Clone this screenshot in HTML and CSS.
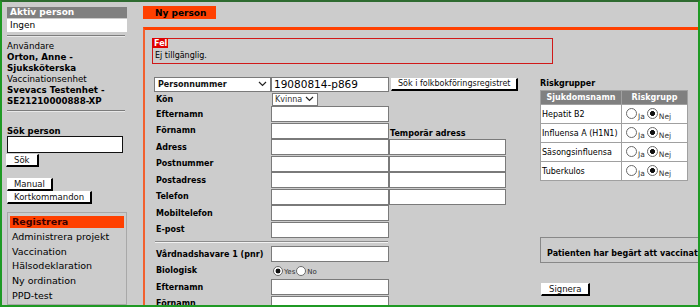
FILE: index.html
```html
<!DOCTYPE html>
<html>
    <head>
        <meta charset="UTF-8">
        <title>Ny person</title>
        <link rel="stylesheet" href="styles.css">
    </head>
    <body>
        <div class="frame">
            <div class="sidebar">
                <div class="box-title">Aktiv person</div>
                <div class="active-name">Ingen</div>
                <hr class="side-rule">
                <div class="user">
                    Användare<br>
                    <b>Orton, Anne -</b><br>
                    <b>Sjuksköterska</b><br>
                    Vaccinationsenhet<br>
                    <b>Svevacs Testenhet -</b><br>
                    <b>SE21210000888-XP</b>
                </div>
                <hr class="side-rule">
                <div class="search">
                    <div class="search-label">Sök person</div>
                    <input class="search-input" type="text">
                    <button class="btn">Sök</button>
                </div>
                <div class="tools">
                    <button class="btn">Manual</button>
                    <button class="btn">Kortkommandon</button>
                </div>
                <ul class="nav">
                    <li class="selected">Registrera</li>
                    <li>Administrera projekt</li>
                    <li>Vaccination</li>
                    <li>Hälsodeklaration</li>
                    <li>Ny ordination</li>
                    <li>PPD-test</li>
                </ul>
            </div>

            <div class="main">
                <div class="tab">Ny person</div>
                <div class="panel">
                    <div class="error">
                        <div class="error-tag">Fel</div>
                        <div class="error-text">Ej tillgänglig.</div>
                    </div>

                    <div class="columns">
                        <div class="person-form">
                            <div class="row row-first">
                                <div class="select wide">
                                    <select><option>Personnummer</option></select>
                                    <svg width="9" height="6" viewBox="0 0 9 6"><path d="M1 1 L4.5 4.5 L8 1" fill="none" stroke="#222" stroke-width="1.2"/></svg>
                                </div>
                                <input class="field pnr" type="text" value="19080814-p869">
                                <button class="btn lookup">Sök i folkbokföringsregistret</button>
                            </div>
                            <div class="row row-small">
                                <label>Kön</label>
                                <div class="select small">
                                    <select><option>Kvinna</option></select>
                                    <svg width="9" height="6" viewBox="0 0 9 6"><path d="M1 1 L4.5 4.5 L8 1" fill="none" stroke="#222" stroke-width="1.2"/></svg>
                                </div>
                            </div>
                            <div class="row">
                                <label>Efternamn</label>
                                <input class="field" type="text">
                            </div>
                            <div class="row">
                                <label>Förnamn</label>
                                <input class="field" type="text">
                                <span class="temp-title">Temporär adress</span>
                            </div>
                            <div class="row">
                                <label>Adress</label>
                                <input class="field" type="text">
                                <input class="field temp" type="text">
                            </div>
                            <div class="row">
                                <label>Postnummer</label>
                                <input class="field" type="text">
                                <input class="field temp" type="text">
                            </div>
                            <div class="row">
                                <label>Postadress</label>
                                <input class="field" type="text">
                                <input class="field temp" type="text">
                            </div>
                            <div class="row">
                                <label>Telefon</label>
                                <input class="field" type="text">
                                <input class="field temp" type="text">
                            </div>
                            <div class="row">
                                <label>Mobiltelefon</label>
                                <input class="field" type="text">
                            </div>
                            <div class="row">
                                <label>E-post</label>
                                <input class="field" type="text">
                            </div>

                            <hr class="form-rule">

                            <div class="row">
                                <label>Vårdnadshavare 1 (pnr)</label>
                                <input class="field" type="text">
                            </div>
                            <div class="row">
                                <label>Biologisk</label>
                                <div class="choices">
                                    <input type="radio" name="bio" checked><span>Yes</span>
                                    <input type="radio" name="bio"><span>No</span>
                                </div>
                            </div>
                            <div class="row">
                                <label>Efternamn</label>
                                <input class="field" type="text">
                            </div>
                            <div class="row">
                                <label>Förnamn</label>
                                <input class="field" type="text">
                            </div>
                        </div>

                        <div class="side-col">
                            <div class="risk-title">Riskgrupper</div>
                            <table class="risk">
                                <tr>
                                    <th class="name-col">Sjukdomsnamn</th>
                                    <th>Riskgrupp</th>
                                </tr>
                                <tr>
                                    <td>Hepatit B2</td>
                                    <td class="opts"><input type="radio" name="r1"><span>Ja</span><input type="radio" name="r1" checked><span>Nej</span></td>
                                </tr>
                                <tr>
                                    <td>Influensa A (H1N1)</td>
                                    <td class="opts"><input type="radio" name="r2"><span>Ja</span><input type="radio" name="r2" checked><span>Nej</span></td>
                                </tr>
                                <tr>
                                    <td>Säsongsinfluensa</td>
                                    <td class="opts"><input type="radio" name="r3"><span>Ja</span><input type="radio" name="r3" checked><span>Nej</span></td>
                                </tr>
                                <tr>
                                    <td>Tuberkulos</td>
                                    <td class="opts"><input type="radio" name="r4"><span>Ja</span><input type="radio" name="r4" checked><span>Nej</span></td>
                                </tr>
                            </table>

                            <div class="consent">Patienten har begärt att vaccinationen inte registreras</div>
                            <button class="btn sign">Signera</button>
                        </div>
                    </div>
                </div>
            </div>
        </div>
    </body>
</html>
```

FILE: styles.css
```css
body {
    margin: 0;
    background: #cccccc;
    font-family: "DejaVu Sans", Verdana, sans-serif;
}

.frame {
    width: 700px;
    height: 307px;
    box-sizing: border-box;
    border: 2px solid #1f9a24;
    border-top-color: #2e6b30;
    background: #cccccc;
    display: flex;
    overflow: hidden;
}

/* sidebar */

.sidebar {
    width: 120px;
    flex: none;
    padding: 5px 0 0 5px;
}

.box-title {
    background: #808080;
    color: white;
    font-weight: bold;
    font-size: 9px;
    line-height: 11px;
    padding-left: 3px;
}

.active-name {
    background: white;
    margin-top: 1px;
    font-size: 9px;
    line-height: 13px;
    padding-left: 3px;
}

.side-rule {
    margin: 3px 2px 0 0;
    border: none;
    border-top: 1px solid #7c7c7c;
    border-bottom: 1px solid #e8e8e8;
}

.user {
    margin-top: 4px;
    font-size: 8.7px;
    line-height: 11px;
}

.search {
    margin-top: 14px;
}

.search-label {
    font-weight: bold;
    font-size: 8.5px;
    line-height: 10px;
}

.search-input {
    display: block;
    box-sizing: border-box;
    width: 116px;
    height: 17px;
    margin: 0;
    border: 1px solid #111;
    background: white;
}

.btn {
    display: block;
    background: white;
    border: 1px solid white;
    border-right: 2px solid black;
    border-bottom: 2px solid black;
    font-family: "DejaVu Sans", Verdana, sans-serif;
    font-size: 8.5px;
    line-height: 9px;
    height: 13px;
    padding: 0 6px;
    margin: 1px 0 0;
    color: #111;
}

.search .btn {
    margin-left: -1px;
    padding: 0 7px;
}

.tools {
    margin-top: 11px;
}

.tools .btn {
    margin-top: 0;
}

.nav {
    list-style: none;
    margin: 8px 0 0;
    padding: 3px 2px 0 2px;
    border: 1px solid #a8a8a8;
    font-size: 9.5px;
}

.nav li {
    line-height: 14.7px;
    padding-left: 2px;
}

.nav .selected {
    background: #ff4000;
    color: #3a0000;
    font-weight: bold;
    line-height: 12px;
    margin-bottom: 2px;
}

/* main */

.main {
    flex: 1;
    margin-left: 16px;
}

.tab {
    width: 61px;
    height: 13px;
    margin-top: 4px;
    padding-left: 12px;
    background: #ff4000;
    font-weight: bold;
    font-size: 9px;
    line-height: 14px;
}

.panel {
    margin-top: 8px;
    border-top: 3px solid #ff4000;
    border-left: 2px solid #f2602e;
    padding: 8px 0 0 7px;
    height: 300px;
}

.error {
    width: 399px;
    height: 24px;
    border: 1px solid #d01818;
}

.error-tag {
    width: 14px;
    height: 10px;
    margin: -1px 0 0 -1px;
    padding-left: 2px;
    overflow: hidden;
    background: #e00000;
    color: white;
    font-weight: bold;
    font-size: 8px;
    line-height: 11px;
}

.error-text {
    font-size: 8px;
    line-height: 11px;
    padding-left: 2px;
    margin-top: 2px;
}

.columns {
    display: flex;
    margin-top: 12px;
}

.person-form {
    width: 384px;
    margin-left: 2px;
    flex: none;
}

.row {
    display: flex;
    align-items: center;
    height: 16.5px;
}

.row-first {
    height: 16px;
}

.row-small {
    height: 14px;
}

.row label {
    width: 115px;
    padding-left: 2px;
    flex: none;
    font-size: 8px;
    font-weight: bold;
}

.field {
    box-sizing: border-box;
    width: 118px;
    height: 16px;
    margin: 0;
    border: 1px solid #7a7a7a;
    background: white;
    font-family: "DejaVu Sans", Verdana, sans-serif;
    padding: 0 2px;
}

.field.temp {
    width: 117px;
    margin-left: 0;
}

.pnr {
    font-size: 10.5px;
    height: 15px;
}

.select {
    display: flex;
    align-items: center;
    box-sizing: border-box;
    background: white;
    border: 1px solid #7a7a7a;
}

.select select {
    appearance: none;
    -webkit-appearance: none;
    border: none;
    background: transparent;
    flex: 1;
    padding: 0 0 0 3px;
    margin: 0;
    font-family: "DejaVu Sans", Verdana, sans-serif;
    font-size: 8px;
    font-weight: bold;
    color: #111;
}

.select svg {
    margin-right: 3px;
    flex: none;
}

.select.wide {
    width: 117px;
    height: 15px;
}

.select.small {
    width: 46px;
    height: 13px;
    margin-left: 1px;
}

.select.small select {
    font-weight: normal;
    color: #333;
    padding-left: 2px;
}

.lookup {
    margin: 0 0 0 2px;
    height: 13px;
    font-size: 8px;
    padding: 0 6px;
}

.temp-title {
    align-self: flex-end;
    font-size: 8px;
    font-weight: bold;
    line-height: 11px;
    margin-left: 1px;
}

.form-rule {
    width: 233px;
    margin: 3px 0 3px 1px;
    border: none;
    border-top: 1px solid #8c8c8c;
    border-bottom: 1px solid #f2f2f2;
}

input[type="radio"] {
    appearance: none;
    -webkit-appearance: none;
    box-sizing: border-box;
    width: 10px;
    height: 10px;
    margin: 0;
    border: 1px solid #6a6a6a;
    border-radius: 50%;
    background: white;
    flex: none;
}

input[type="radio"]:checked {
    background: radial-gradient(circle, #111 0 2.2px, white 2.7px);
}

.choices {
    display: flex;
    align-items: flex-end;
    margin-left: 2px;
    font-size: 7px;
    color: #333;
}

.choices span {
    margin: 0 1px 0 1px;
    line-height: 8px;
}

/* right column */

.side-col {
    flex: none;
    margin: 2px 0 0 2px;
}

.risk-title {
    font-size: 8px;
    font-weight: bold;
    line-height: 12px;
}

.risk {
    margin-top: 0;
    border-collapse: collapse;
    font-size: 8px;
    width: 148px;
}

.risk th {
    background: #808080;
    color: white;
    font-weight: bold;
    height: 13px;
    padding: 0 2px;
    border: 1px solid #a0a0a0;
    text-align: center;
}

.risk .name-col {
    width: 76px;
}

.risk td {
    background: white;
    height: 18px;
    padding: 0 1px;
    border: 1px solid #a0a0a0;
    white-space: nowrap;
}

.risk .opts {
    padding-left: 4px;
}

.risk .opts input {
    width: 11px;
    height: 11px;
    vertical-align: middle;
}

.risk .opts span {
    font-size: 7.5px;
    color: #333;
    margin: 0 2px 0 1px;
    vertical-align: -3px;
}

.consent {
    margin-top: 56px;
    width: 320px;
    height: 26px;
    box-sizing: border-box;
    border: 1px solid #888;
    padding: 11px 0 0 6px;
    font-size: 8px;
    font-weight: bold;
    white-space: nowrap;
}

.sign {
    margin: 20px 0 0 1px;
    height: 13px;
    font-size: 8.5px;
    padding: 0 7px;
}
```
